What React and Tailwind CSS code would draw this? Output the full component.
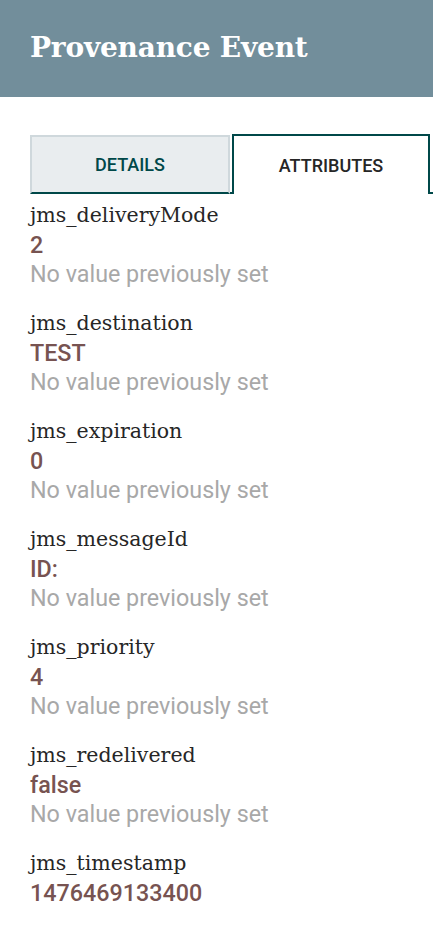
import React from "react";

const items = [
  ["jms_deliveryMode", "2", true],
  ["jms_destination", "TEST", true],
  ["jms_expiration", "0", true],
  ["jms_messageId", "ID:", true],
  ["jms_priority", "4", true],
  ["jms_redelivered", "false", true],
  ["jms_timestamp", "1476469133400", false],
];

export default function App() {
  return (
    <div className="w-[433px] h-[928px] overflow-hidden bg-white">
      <div className="h-[97px] bg-[#728e9b] flex items-center pl-[30px]">
        <h1 className="text-white font-bold text-[28px] font-['DejaVu_Serif',serif] tracking-[-0.2px] pb-[2px]">
          Provenance Event
        </h1>
      </div>
      <div className="pl-[30px] pt-[37px]">
        <div className="flex items-end h-[60px]">
          <div className="w-[200px] h-[59px] bg-[#e9edef] border-2 border-[#cfd8dc] border-b-[#004849] flex items-center justify-center font-['Roboto',sans-serif] font-medium text-[18px] text-[#004849]">
            DETAILS
          </div>
          <div className="w-[2px] h-[2px] bg-[#004849]"></div>
          <div className="w-[198px] h-[60px] bg-white border-2 border-b-0 border-[#004849] flex items-center justify-center font-['Roboto',sans-serif] font-medium text-[18px] text-[#262626]">
            ATTRIBUTES
          </div>
          <div className="w-[3px] h-[2px] bg-[#004849]"></div>
        </div>
        <div className="pt-[7px]">
          {items.map(([k, v, nv]) => (
            <div key={k} className="mb-[21px]">
              <div className="font-['DejaVu_Serif',serif] text-[20.5px] leading-[29px] text-[#262626]">{k}</div>
              <div className="font-['Roboto',sans-serif] font-medium text-[23.3px] leading-[30px] text-[#775351]">{v}</div>
              {nv && (
                <div className="font-['Roboto',sans-serif] text-[23.3px] leading-[28px] text-[#a8a8a8]">No value previously set</div>
              )}
            </div>
          ))}
        </div>
      </div>
    </div>
  );
}
